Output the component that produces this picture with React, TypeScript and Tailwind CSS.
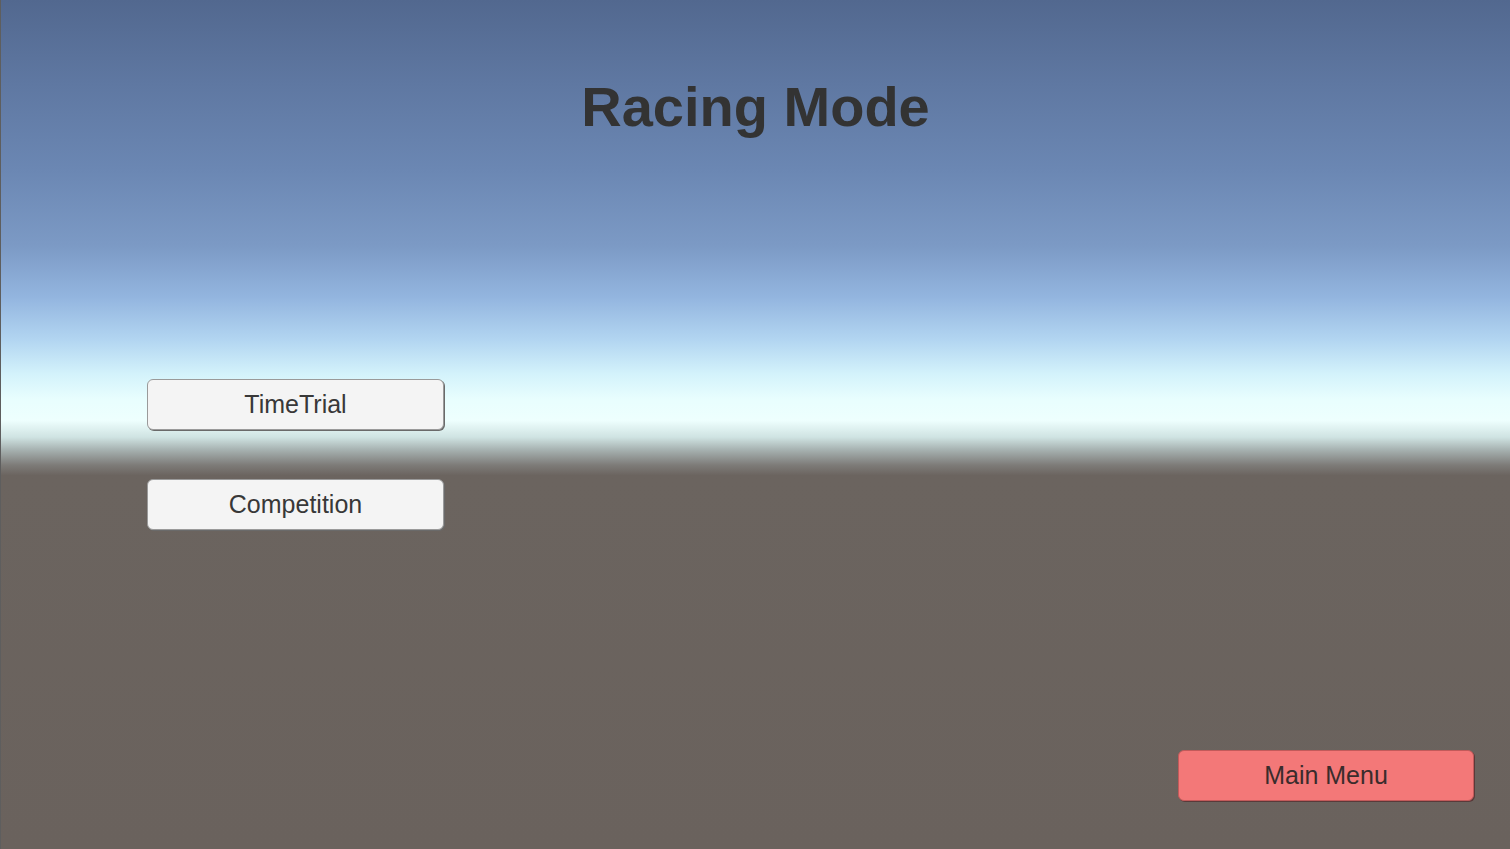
import React from 'react';

export default function App() {
  const btn =
    'w-[297px] h-[51px] rounded-[6px] bg-[#f4f4f4] border border-[#9a9a9a] shadow-[1px_1px_0_#6a6a6a] text-[25px] text-[#383838] flex items-center justify-center';

  return (
    <div
      className="w-full h-[849px] flex flex-col border-l border-[#5e5e5e] overflow-hidden bg-[linear-gradient(180deg,#52688f_0%,#5f78a2_10%,#6b87b3_20%,#7c9ac5_29%,#93b5df_35%,#b2d5f1_40%,#d3f2fb_44%,#e8fefe_47%,#eefffe_49.5%,#cfe3e2_51.5%,#a6b1b0_53%,#7d7b78_54.8%,#6b645f_56%,#6a625d_100%)]"
      style={{ fontFamily: '"Liberation Sans", Arial, sans-serif' }}
    >
      <div className="pt-[75px] text-center">
        <h1 className="text-[56px] leading-[64px] font-bold text-[#333333]">Racing Mode</h1>
      </div>

      <div className="mt-[240px] pl-[146px] flex flex-col gap-[49px]">
        <button className={btn}>TimeTrial</button>
        <button className={btn}>Competition</button>
      </div>

      <div className="flex-1" />

      <div className="flex justify-end pr-[36px] pb-[48px]">
        <button className="w-[296px] h-[51px] rounded-[6px] bg-[#f37878] border border-[#c25a5a] shadow-[1px_1px_0_#5a3a3a] text-[25px] text-[#3a2c2c] flex items-center justify-center">
          Main Menu
        </button>
      </div>
    </div>
  );
}
